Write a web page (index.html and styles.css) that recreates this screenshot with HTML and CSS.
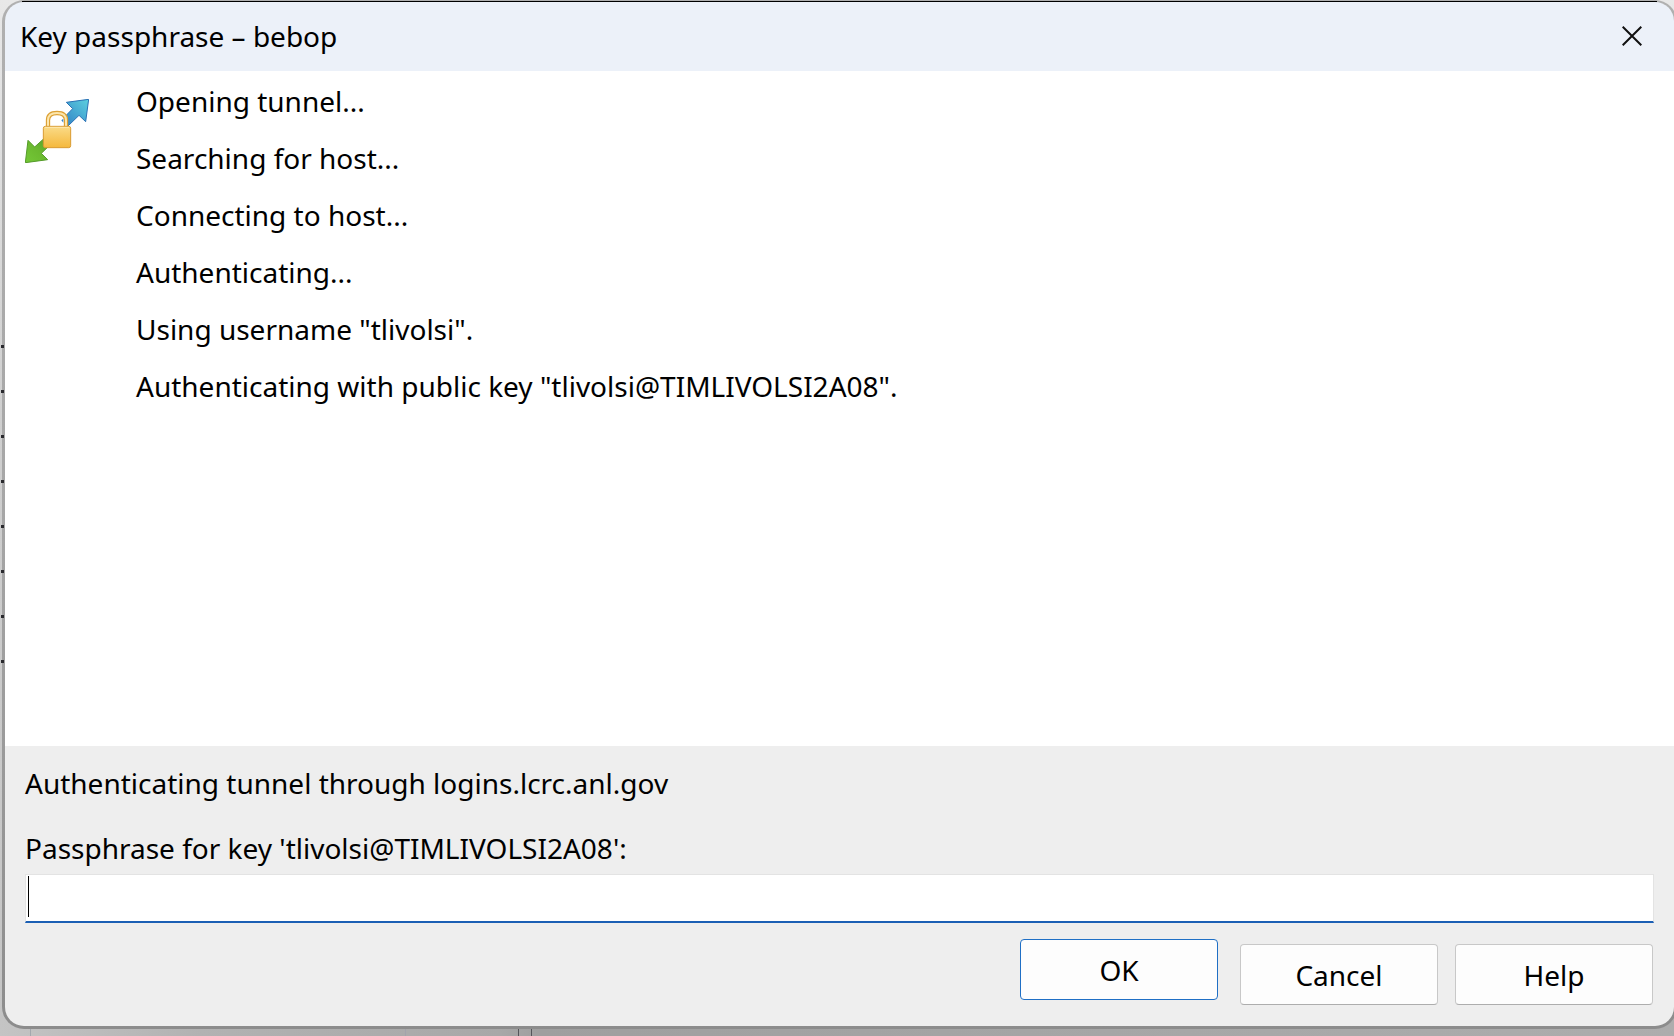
FILE: index.html
```html
<!DOCTYPE html>
<html lang="en">
<head>
<meta charset="utf-8">
<meta name="viewport" content="width=device-width, initial-scale=1">
<title>Key passphrase – bebop</title>
<link rel="stylesheet" href="styles.css">
</head>
<body>
<form class="dialog" role="dialog" aria-labelledby="dialog-title" autocomplete="off">
  <header class="titlebar">
    <h1 class="title" id="dialog-title">Key passphrase – bebop</h1>
    <button class="close" type="button" aria-label="Close">
      <svg width="20" height="20" viewBox="0 0 20 20" aria-hidden="true"><path d="M.7.7l18.6 18.6M19.3.7L.7 19.3" fill="none" stroke="#111" stroke-width="2"/></svg>
    </button>
  </header>
  <main class="log">
    <svg class="log-icon" width="64" height="64" viewBox="30 27 192 192" aria-hidden="true">
      <defs>
        <linearGradient id="blue" x1="0" y1="1" x2="1" y2="0"><stop offset="0" stop-color="#2f7cc4"/><stop offset="1" stop-color="#5cd0df"/></linearGradient>
        <linearGradient id="green" x1="1" y1="0" x2="0" y2="1"><stop offset="0" stop-color="#4f9a2b"/><stop offset=".5" stop-color="#6bb92f"/><stop offset="1" stop-color="#74c837"/></linearGradient>
        <linearGradient id="gold" x1="0" y1="0" x2="0" y2="1"><stop offset="0" stop-color="#fadb88"/><stop offset="1" stop-color="#f5b83c"/></linearGradient>
      </defs>
      <path d="M221 28L154 37L173 56L139 91L158 109L192 76L212 95Z" fill="url(#blue)" stroke="#2a71b5" stroke-width="3" stroke-linejoin="round"/>
      <path d="M31 218L39 151L59 171L90 143L108 162L79 190L98 209Z" fill="url(#green)" stroke="#559b2b" stroke-width="3" stroke-linejoin="round"/>
      <path d="M99 112V91Q99 69 126 69T153 91V112" fill="#fff" stroke="#dda135" stroke-width="13"/>
      <path d="M99 112V91Q99 69 126 69T153 91V112" fill="none" stroke="#fce6ad" stroke-width="6"/>
      <path d="M139 91L145 86V98Z" fill="#3683c7"/>
      <rect x="85" y="109" width="82" height="64" rx="6" fill="url(#gold)" stroke="#d99b31" stroke-width="3"/>
      <path d="M89 112H163" stroke="#fff0c4" stroke-width="2"/>
    </svg>
    <div class="log-lines" role="log">
      <p>Opening tunnel...</p>
      <p>Searching for host...</p>
      <p>Connecting to host...</p>
      <p>Authenticating...</p>
      <p>Using username "tlivolsi".</p>
      <p>Authenticating with public key "tlivolsi@TIMLIVOLSI2A08".</p>
    </div>
  </main>
  <section class="prompt">
    <p class="instructions">Authenticating tunnel through logins.lcrc.anl.gov</p>
    <label class="label" for="passphrase">Passphrase for key 'tlivolsi@TIMLIVOLSI2A08':</label>
    <input class="field" id="passphrase" type="password">
    <div class="actions">
      <button class="button button-default" type="submit">OK</button>
      <button class="button" type="button">Cancel</button>
      <button class="button" type="button">Help</button>
    </div>
  </section>
</form>
<div class="edge-dots" aria-hidden="true"></div>
</body>
</html>
```
FILE: styles.css
```css
* {
  box-sizing: border-box;
}

body {
  margin: 0;
  min-height: 100vh;
  overflow: hidden;
  padding: 0 0 7px 2px;
  color: #000;
  font: 28px/40px "Noto Sans", "Open Sans", sans-serif;
  /* the window behind the dialog: two column dividers over a shaded desktop */
  background:
    linear-gradient(#55555a, #55555a) 518px 100% / 1px 10px no-repeat,
    linear-gradient(#55555a, #55555a) 531px 100% / 1px 10px no-repeat,
    linear-gradient(#a3a8ae, #a3a8ae) 30px 100% / 1px 10px no-repeat,
    linear-gradient(#a3a3ac, #a3a3ac) 405px 100% / 1px 10px no-repeat,
    linear-gradient(90deg, #c4c4c4, #b2b2b2 200px, #a8a8a8 500px, #9f9f9f 540px, #adadad) 0 100% / 100% 20px no-repeat,
    linear-gradient(#e8e8e8, #cfcfcf 40%, #c4c4c4);
}

h1,
p {
  margin: 0;
  font: inherit;
}

button,
input {
  font: inherit;
  color: inherit;
}

.dialog {
  position: relative;
  display: flex;
  flex-direction: column;
  min-height: calc(100vh - 7px);
  margin-right: -3px;
  border: 3px solid transparent;
  border-top-width: 2px;
  border-radius: 22px;
  background: linear-gradient(#b0b0b0, #a6a6a6 50%, #8c8c8c) border-box;
}

.dialog::before {
  content: "";
  position: absolute;
  top: -1px;
  left: 17px;
  right: 17px;
  height: 1px;
  background: #000;
}

.titlebar {
  display: flex;
  align-items: center;
  justify-content: space-between;
  height: 69px;
  padding: 0 22px 2px 15px;
  border-radius: 19px 19px 0 0;
  background: #ecf1f9;
}

.close {
  display: flex;
  padding: 10px;
  border: 0;
  background: none;
}

.log {
  flex: 1;
  display: flex;
  gap: 47px;
  padding: 2px 20px;
  background: #fff;
}

.log-icon {
  flex: none;
  margin-top: 26px;
}

.log-lines p {
  line-height: 57px;
}

.prompt {
  display: flex;
  flex-direction: column;
  padding: 17px 20px 21px;
  border-radius: 0 0 19px 19px;
  background: #eee;
}

.label {
  margin-top: 25px;
}

.field {
  height: 49px;
  margin-top: 6px;
  padding: 0 4px;
  border: 1px solid #e3e3e3;
  border-bottom: 2px solid #1b5fb4;
  border-radius: 0;
  outline: 0;
  background: linear-gradient(#000, #000) 2px 1px / 1px 41px no-repeat #fff;
}

.actions {
  display: flex;
  justify-content: flex-end;
  align-items: flex-end;
  gap: 17px;
  margin-top: 16px;
  padding-right: 1px;
}

.button {
  width: 198px;
  height: 61px;
  padding: 0;
  border: 1px solid #c8c8c8;
  border-bottom-color: #adadad;
  border-radius: 4px;
  background: #fdfdfd;
}

.button-default {
  margin: 0 5px 5px 0;
  border-color: #1f6fc5;
}

/* ends of text lines from the window behind */
.edge-dots {
  position: absolute;
  top: 345px;
  left: 1px;
  width: 3px;
  height: 318px;
  background: linear-gradient(#2a2a2e 3px, transparent 3px) 0 0 / 3px 45px;
}
```
